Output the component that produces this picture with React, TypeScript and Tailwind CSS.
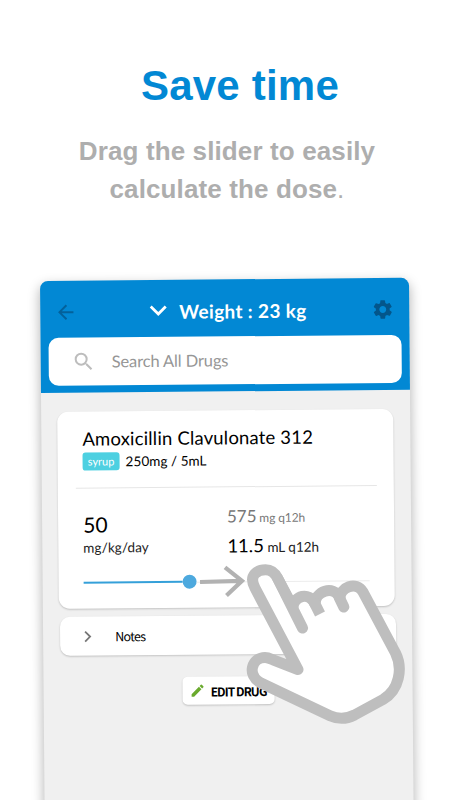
import { MdArrowBack, MdEdit, MdSearch, MdSettings } from "react-icons/md";

function Header() {
  return (
    <header className="h-[112px] bg-[#0288d4] rounded-t-[8px] px-[8px]">
      <div className="h-[57px] flex items-center pl-[6px] pr-[7px] pt-[5px]">
        <MdArrowBack className="size-[23px] text-[#03619b]" />
        <svg className="ml-[72px] w-[18px] h-[12px]" viewBox="0 0 18 12" fill="none" stroke="#fff" strokeWidth="2.8">
          <path d="M1.500 1.500 9 9l7.500-7.500" />
        </svg>
        <h2 className="ml-[12px] text-[19px] leading-none tracking-[0.35px] font-bold text-white whitespace-nowrap">
          Weight : 23 kg
        </h2>
        <MdSettings className="ml-auto size-[23px] text-[#03568b]" />
      </div>
      <div className="h-[48px] w-[353px] rounded-[10px] bg-white flex items-center pl-[23px]">
        <MdSearch className="size-[24px] text-[#bdbdbd]" />
        <span className="ml-[16px] text-[16.500px] leading-none tracking-[-0.13px] text-[#969696]">Search All Drugs</span>
      </div>
    </header>
  );
}

function DrugCard() {
  return (
    <section className="h-[197px] w-[336px] rounded-[11px] bg-white shadow-[0_1px_2px_rgba(0,0,0,0.2)] px-[25px] pt-[16px]">
      <h3 className="text-[18.500px] leading-[22px] tracking-[0.17px] text-black whitespace-nowrap">Amoxicillin Clavulonate 312</h3>
      <div className="mt-[3px] flex items-center gap-[6px]">
        <span className="h-[18px] w-[37px] rounded-[3px] bg-[#4dd0e1] text-center text-[11px] leading-[18px] text-white">syrup</span>
        <span className="text-[13.500px] leading-[18px] tracking-[0.05px] text-black">250mg / 5mL</span>
      </div>
      <div className="mt-[17px] -ml-[7px] h-px w-[301px] bg-[#e6e6e6]" />
      <div className="mt-[15px] flex text-[#222]">
        <div className="w-[144px] pt-[9px]">
          <p className="text-[21px] leading-[24px] text-black">50</p>
          <p className="text-[13.500px] leading-[22px] tracking-[0.1px]">mg/kg/day</p>
        </div>
        <div className="whitespace-nowrap">
          <p className="text-[12px] leading-[28px] tracking-[-0.1px] text-[#777]">
            <span className="text-[17px]">575</span> mg q12h
          </p>
          <p className="-mt-[2px] text-[13.500px] leading-[30px]">
            <span className="text-[18.500px] text-black">11.5</span> mL q12h
          </p>
        </div>
      </div>
      <div className="mt-[12px] flex h-[14px] items-center">
        <div className="h-[2px] w-[99px] bg-[#35a0d9]" />
        <div className="size-[14px] rounded-full bg-[#4da9de]" />
        <div className="h-px w-[173px] bg-[#ececec]" />
      </div>
    </section>
  );
}

function DragHint() {
  return (
    <svg className="absolute left-0 top-0" width="450" height="800" viewBox="0 0 450 800" fill="none">
      <path d="M200 582 242 580.800M225 567.300 242 580.800 226.500 595.500" stroke="#b2b2b2" strokeWidth="4.200" />
      <path
        d="M298 669.500 255 588C248 575 258 569.700 265.500 569.700C271 569.700 275 573 277.500 578L293 607C294 596 309 591 315 604C315 592 333 584 340 598C340 588 356 580 363 592L395.500 653C403 668 399.500 690 383 699.500L354.500 715C346 719.300 338 719.300 330 715.700L261 683C246 675 252 657.500 265 657.500C268 657.500 270 658.500 273 659.800Z"
        fill="#fff"
        stroke="#bebebe"
        strokeWidth="11"
        strokeLinejoin="round"
      />
      <path d="M277.500 578 302.500 628M339 597 343.800 607" stroke="#bebebe" strokeWidth="11" strokeLinecap="round" />
      <path d="M313 600 320 614" stroke="#bebebe" strokeWidth="11" />
    </svg>
  );
}

export default function App() {
  return (
    <div className="relative h-[800px] w-[450px] overflow-hidden bg-white">
      <div className="h-[281px] pt-[61px] text-center font-bold font-['Liberation_Sans',sans-serif]">
        <h1 className="pl-[30px] text-[42px] leading-[50px] tracking-[0.2px] text-[#0288d4]">Save time</h1>
        <p className="mt-[22px] pl-[4px] text-[26px] leading-[37.500px] tracking-[0.12px] text-[#aeaeae]">
          Drag the slider to easily
          <br />
          calculate the dose<span className="font-normal">.</span>
        </p>
      </div>

      <main className="ml-[40px] h-[560px] w-[369px] origin-top-left rotate-[-0.5deg] rounded-t-[8px] bg-[#f0f0f0] shadow-[0_5px_12px_1px_rgba(0,0,0,0.28)] font-['Lato',sans-serif]">
        <Header />
        <div className="pl-[16px] pt-[19px]">
          <DrugCard />
          <section className="mt-[8px] ml-px h-[39px] w-[336px] rounded-[10px] bg-white shadow-[0_1px_2px_rgba(0,0,0,0.2)] flex items-center pl-[24px]">
            <svg className="w-[8px] h-[12px]" viewBox="0 0 8 12" fill="none" stroke="#777" strokeWidth="1.800">
              <path d="M1 1l5 5-5 5" />
            </svg>
            <span className="ml-[23px] pt-[2px] text-[12.500px] leading-none tracking-[-0.65px] text-black font-['Noto_Sans_CJK_SC',sans-serif]">Notes</span>
          </section>
          <button className="mt-[22px] ml-[123px] h-[28px] w-[92px] rounded-[5px] bg-white shadow-[0_1px_2px_rgba(0,0,0,0.2)] flex items-center pl-[7px] whitespace-nowrap">
            <MdEdit className="size-[16px] text-[#6aaa2e]" />
            <span className="ml-[5px] pt-px text-[12px] leading-none tracking-[-0.95px] font-bold text-black font-['Noto_Sans_CJK_SC',sans-serif]">EDIT DRUG</span>
          </button>
        </div>
      </main>

      <DragHint />
    </div>
  );
}
